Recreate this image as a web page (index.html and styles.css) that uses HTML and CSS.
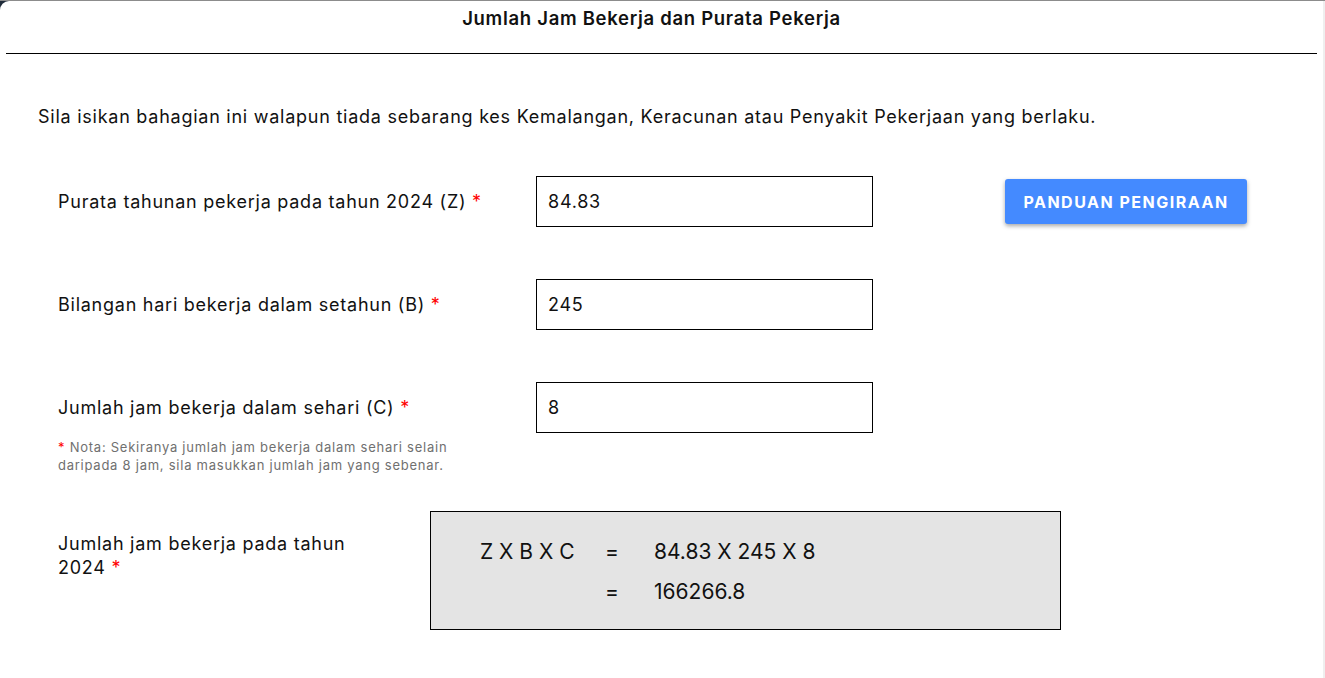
FILE: index.html
```html
<!DOCTYPE html>
<html lang="ms">
<head>
<meta charset="utf-8">
<title>Jumlah Jam Bekerja dan Purata Pekerja</title>
<link rel="stylesheet" href="styles.css">
</head>
<body>
<div class="frame">
  <div class="card">
    <header class="card-header">
      <h1 class="title">Jumlah Jam Bekerja dan Purata Pekerja</h1>
    </header>
    <div class="card-body">
      <p class="intro">Sila isikan bahagian ini walapun tiada sebarang kes Kemalangan, Keracunan atau Penyakit Pekerjaan yang berlaku.</p>

      <div class="row">
        <div class="label">Purata tahunan pekerja pada tahun 2024 (Z) <span class="req">*</span></div>
        <div class="input">84.83</div>
        <button class="btn">PANDUAN PENGIRAAN</button>
      </div>

      <div class="row">
        <div class="label">Bilangan hari bekerja dalam setahun (B) <span class="req">*</span></div>
        <div class="input">245</div>
      </div>

      <div class="row row-note">
        <div class="label-group">
          <div class="label">Jumlah jam bekerja dalam sehari (C) <span class="req">*</span></div>
          <p class="note"><span class="req">*</span> Nota: Sekiranya jumlah jam bekerja dalam sehari selain daripada 8 jam, sila masukkan jumlah jam yang sebenar.</p>
        </div>
        <div class="input">8</div>
      </div>

      <div class="result-row">
        <div class="result-label">Jumlah jam bekerja pada tahun 2024 <span class="req">*</span></div>
        <div class="calc">
          <div class="calc-line"><span class="c1">Z X B X C</span><span class="c2">=</span><span class="c3">84.83 X 245 X 8</span></div>
          <div class="calc-line"><span class="c1"></span><span class="c2">=</span><span class="c3">166266.8</span></div>
        </div>
      </div>
    </div>
  </div>
  <div class="edge"></div>
</div>
</body>
</html>
```

FILE: styles.css
```css
* { box-sizing: border-box; }
html, body { margin: 0; padding: 0; }
body {
  background: #1f2b3a;
  font-family: Inter, "Noto Sans", sans-serif;
  color: #111;
  height: 678px;
  overflow: hidden;
}
.frame {
  display: flex;
  height: 678px;
  border-top: 1px solid #8c8c8c;
}
.card {
  flex: 1;
  background: #fff;
  border-top-left-radius: 9px;
  padding: 0 6px;
}
.edge {
  width: 2px;
  background: #efefef;
}
.card-header {
  height: 53px;
  border-bottom: 1px solid #000;
  padding-top: 6px;
  padding-right: 20px;
}
.title {
  margin: 0;
  text-align: center;
  font-size: 18.5px;
  font-weight: 600;
  letter-spacing: 0.7px;
  line-height: 22px;
  color: #111;
}
.card-body {
  padding: 0 0 0 32px;
  letter-spacing: 0.75px;
}
.intro {
  margin: 0;
  padding-top: 51px;
  font-size: 18px;
  line-height: 24px;
  height: 122px;
}
.row {
  display: flex;
  align-items: flex-start;
  padding-left: 20px;
  height: 103px;
}
.label {
  width: 478px;
  font-size: 18px;
  line-height: 24px;
  padding-top: 14px;
}
.req { color: #ff0000; }
.input {
  width: 337px;
  height: 51px;
  border: 1px solid #000;
  padding: 13px 11px;
  font-size: 18px;
  line-height: 24px;
}
.btn {
  margin-left: 132px;
  margin-top: 3px;
  width: 242px;
  height: 45px;
  background: #448aff;
  color: #fff;
  border: 0;
  border-radius: 3px;
  box-shadow: 0 2px 4px rgba(0,0,0,0.35);
  font-family: Inter, "Noto Sans", sans-serif;
  font-size: 16px;
  font-weight: 700;
  letter-spacing: 1.5px;
  padding: 0;
}
.row-note { height: 129px; }
.note {
  margin: 18px 0 0;
  width: 420px;
  font-size: 13px;
  line-height: 18px;
  letter-spacing: 0.75px;
  color: #707070;
}
.result-row {
  display: flex;
  align-items: flex-start;
  padding-left: 20px;
}
.result-label {
  width: 372px;
  padding-right: 60px;
  padding-top: 21px;
  font-size: 18px;
  line-height: 24px;
}
.calc {
  width: 631px;
  height: 119px;
  background: #e4e4e4;
  border: 1px solid #000;
  padding: 27px 0 0 49px;
  font-size: 21px;
  letter-spacing: 0;
}
.calc-line {
  display: flex;
  height: 40px;
  line-height: 26px;
}
.c1 { width: 125px; }
.c2 { width: 49px; }
```
